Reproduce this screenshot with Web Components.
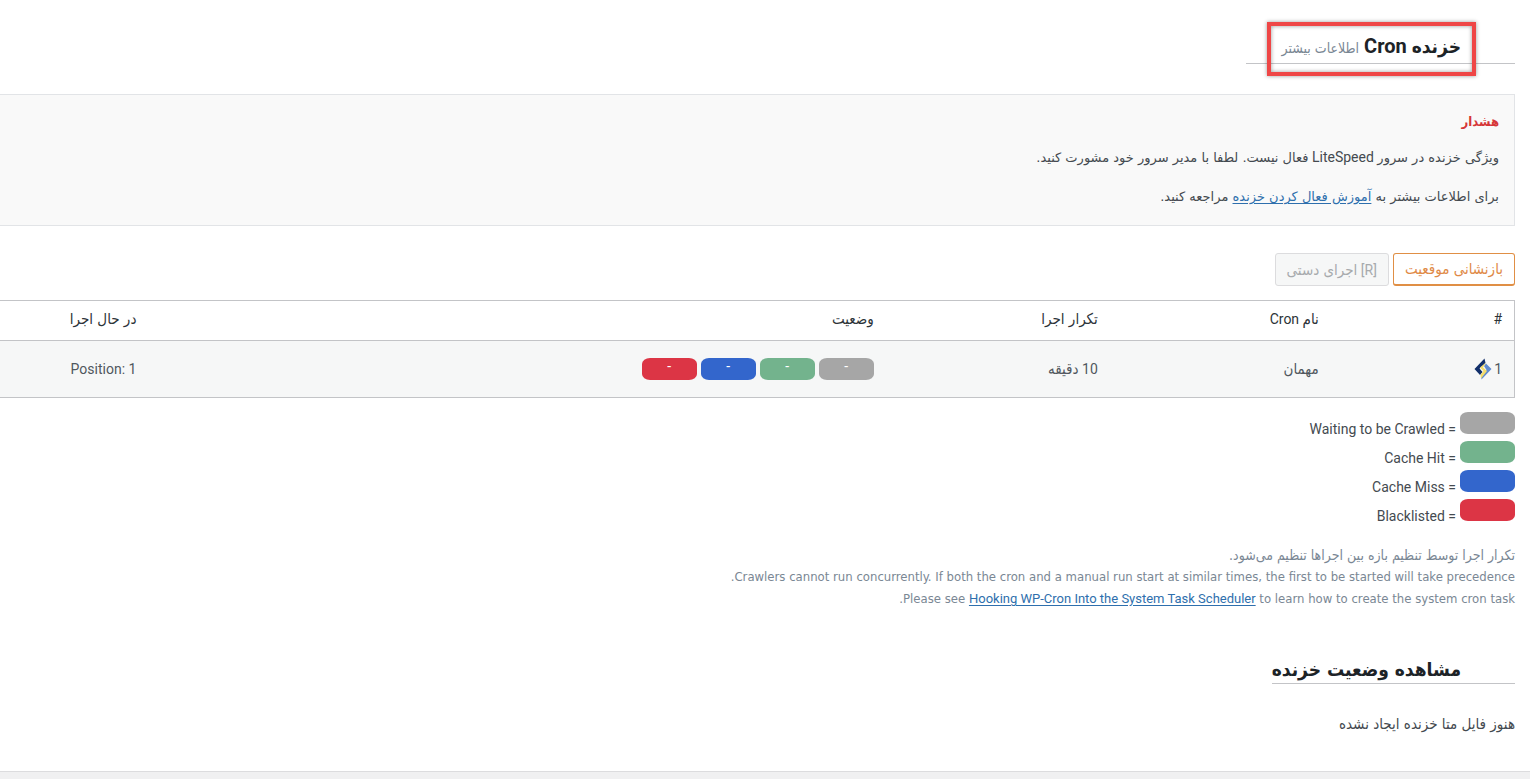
<!DOCTYPE html>
<html lang="fa" dir="rtl">
<head>
<meta charset="utf-8">
<title>خزنده Cron</title>
<style>
html{background:#f0f0f1}
body{margin:0;font-family:Roboto,"DejaVu Sans Condensed","DejaVu Sans",sans-serif;font-size:14px;line-height:20px;color:#444a50}
</style>
</head>
<body>
<crawler-page></crawler-page>
<script>
const base = `
*{box-sizing:border-box}
a{color:#2e6fad;text-underline-offset:2px}
.fa{font-family:"DejaVu Sans Condensed","DejaVu Sans",sans-serif;font-size:15px}
.fa.text{font-family:"DejaVu Sans",sans-serif;font-size:13px}
span.fa{line-height:1}
`;
const define = (name, css, html) => customElements.define(name, class extends HTMLElement {
  constructor() {
    super();
    const t = document.createElement('template');
    t.innerHTML = `<style>${base}${css}</style>${html}`;
    this.attachShadow({mode: 'open'}).append(t.content.cloneNode(true));
  }
});

define('section-title', `
:host{display:block}
h3{position:relative;display:inline-block;vertical-align:top;margin:0;padding-right:54px;border-bottom:1px solid #c3c4c7;
  font-size:20px;line-height:28px;font-weight:700;color:#1d2327;white-space:nowrap}
:host([marked]) h3{padding-left:36px;line-height:34px}
.mark{display:none}
:host([marked]) .mark{display:block;position:absolute;top:-7px;bottom:-13px;right:39px;left:21px;
  border:4px solid #ef4646;box-shadow:0 0 4px #0006,inset 0 0 4px #0006}
`, `<h3><slot></slot><span class="mark"></span></h3>`);

define('status-chip', `
:host{display:inline-block;flex:none;width:55px;height:22px;border-radius:8px / 6px;background:#a6a6a6;
  color:#fff;font-size:14px;line-height:16px;text-align:center}
:host([kind=hit]){background:#73b38d}
:host([kind=miss]){background:#3366cc}
:host([kind=black]){background:#dc3545}
`, `<slot></slot>`);

define('lite-logo', `
:host{display:inline-block;width:18px;height:22px}
svg{display:block}
`, `<svg width="18" height="22" viewBox="0 0 18 22" aria-hidden="true">
<path d="M10.500 0.500 0.500 11 6 17 8.500 14 5.500 10.500 11.500 5z" fill="#12306b"/>
<path d="M12 5.500 17.500 11 7.500 21.500 7 17.500 12.500 12 10 8z" fill="#5f8bd0"/>
<path d="M12 4.500 6 9.500 9.500 13 6.500 17 7 20.500 13 13 9 9.500z" fill="#f3dc6b"/>
</svg>`);

define('warning-box', `
:host{display:block;background:#f9f9f9;border:1px solid #e2e4e7;border-left:0;padding:16px 15px 18px 0}
h4{margin:0 0 16px;font-size:14px;line-height:20px;color:#d63638}
h4 .fa{font-size:13px}
p{margin:0 0 20px}
p:last-child{margin:0}
`, `<h4><span class="fa">هشدار</span></h4>
<p><span class="fa text">ویژگی خزنده در سرور</span> LiteSpeed <span class="fa text">فعال نیست. لطفا با مدیر سرور خود مشورت کنید.</span></p>
<p class="fa text">برای اطلاعات بیشتر به <a href="#guide">آموزش فعال کردن خزنده</a> مراجعه کنید.</p>`);

define('action-bar', `
:host{display:flex;gap:4px}
button{height:33px;padding:0 11px;border-radius:3px;font:14px/20px Roboto,sans-serif;background:#fff;border:1px solid #e08f45;
  border-bottom-width:2px;color:#e08a47}
button:disabled{background:#f6f7f7;border:1px solid #dcdcde;color:#a7aaad}
`, `<button type="button"><span class="fa">بازنشانی موقعیت</span></button>
<button type="button" disabled>[R] <span class="fa">اجرای دستی</span></button>`);

define('cron-table', `
:host{display:block}
table{width:100%;table-layout:fixed;border-collapse:separate;border-spacing:0;border:1px solid #c3c4c7;border-left:0}
th,td{padding:0 12px;text-align:right;font-weight:400;white-space:nowrap}
th{height:40px;padding-bottom:3px;border-bottom:1px solid #c3c4c7;color:#2c3338}
td{height:56px;background:#f6f7f7;color:#50575e}
.n{width:12.1%}.name{width:14.6%}.freq{width:14.8%}.stat{width:48.7%}
.row{display:flex;align-items:center;gap:4px}
.id{gap:2px}
`, `<table><thead><tr><th class="n">#</th><th class="name"><span class="fa">نام</span> Cron</th>
<th class="freq fa">تکرار اجرا</th><th class="stat fa">وضعیت</th><th class="fa">در حال اجرا</th></tr></thead>
<tbody><tr><td><div class="row id">1 <lite-logo></lite-logo></div></td><td class="fa">مهمان</td>
<td>10 <span class="fa">دقیقه</span></td>
<td><div class="row"><status-chip>-</status-chip><status-chip kind="hit">-</status-chip><status-chip kind="miss">-</status-chip><status-chip kind="black">-</status-chip></div></td>
<td>Position: 1</td></tr></tbody></table>`);

define('status-legend', `
:host{display:block}
ul{list-style:none;margin:0;padding:0;display:grid;gap:7px}
li{display:flex;gap:4px;height:22px}
li span{padding-top:7px}
`, `<ul><li><status-chip></status-chip><span>= Waiting to be Crawled</span></li>
<li><status-chip kind="hit"></status-chip><span>= Cache Hit</span></li>
<li><status-chip kind="miss"></status-chip><span>= Cache Miss</span></li>
<li><status-chip kind="black"></status-chip><span>= Blacklisted</span></li></ul>`);

define('cron-notes', `
:host{display:block;font:13px/22px "DejaVu Sans Condensed","DejaVu Sans",sans-serif;color:#7a8794}
p{margin:0}
a{font-family:Roboto,sans-serif}
p.fa{font-size:14px}
`, `<p class="fa">تکرار اجرا توسط تنظیم بازه بین اجراها تنظیم می‌شود.</p>
<p>Crawlers cannot run concurrently. If both the cron and a manual run start at similar times, the first to be started will take precedence.</p>
<p>Please see <a href="#hook">Hooking WP-Cron Into the System Task Scheduler</a> to learn how to create the system cron task<span>.</span></p>`);

define('crawler-page', `
:host{display:block}
main{background:#fff;padding:29px 15px 37px 0;border-bottom:1px solid #dcdcde}
warning-box{margin:30px 0 27px}
action-bar{margin-bottom:14px}
status-legend{margin:14px 0 23px}
cron-notes{margin-bottom:45px}
.big{font-family:"DejaVu Sans Condensed","DejaVu Sans",sans-serif;font-size:19px;line-height:1}
small{font-size:14px;line-height:1;font-weight:400;color:#7a8794;font-family:"DejaVu Sans Condensed","DejaVu Sans",sans-serif}
.empty{margin:30px 0 0}
`, `<main>
<section-title marked><span class="big">خزنده</span> Cron <small>اطلاعات بیشتر</small></section-title>
<warning-box></warning-box>
<action-bar></action-bar>
<cron-table></cron-table>
<status-legend></status-legend>
<cron-notes></cron-notes>
<section-title><span class="big">مشاهده وضعیت خزنده</span></section-title>
<p class="empty fa">هنوز فایل متا خزنده ایجاد نشده</p>
</main>`);
</script>
</body>
</html>
